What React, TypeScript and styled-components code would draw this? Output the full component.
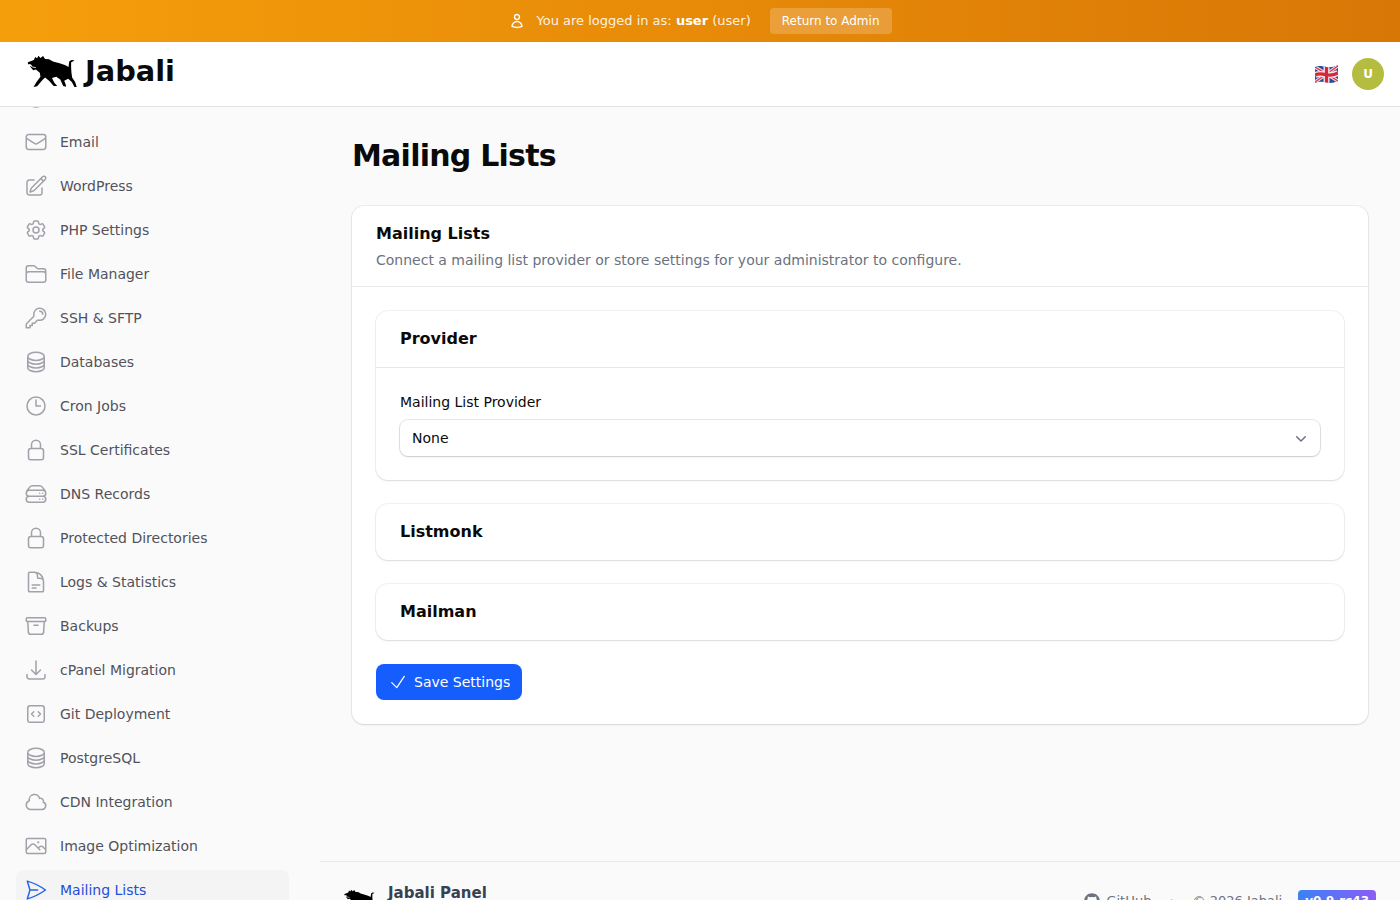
import React from "react";
import styled, { createGlobalStyle } from "styled-components";
import {
  HiOutlineGlobeAlt,
  HiOutlineEnvelope,
  HiOutlinePencilSquare,
  HiOutlineCog6Tooth,
  HiOutlineFolder,
  HiOutlineKey,
  HiOutlineCircleStack,
  HiOutlineClock,
  HiOutlineLockClosed,
  HiOutlineServerStack,
  HiOutlineDocumentText,
  HiOutlineArchiveBox,
  HiOutlineArrowDownTray,
  HiOutlineCodeBracketSquare,
  HiOutlineCloud,
  HiOutlinePhoto,
  HiOutlinePaperAirplane,
  HiOutlineUser,
  HiOutlineCheck,
  HiMiniChevronDown,
} from "react-icons/hi2";
import { FaGithub } from "react-icons/fa";

const GlobalStyle = createGlobalStyle`
  html, body {
    margin: 0;
    height: 100%;
    overflow: hidden;
    background: #fafafa;
    font-family: "DejaVu Sans", sans-serif;
  }
  * {
    box-sizing: border-box;
  }
`;

const Page = styled.div`
  height: 100vh;
  display: flex;
  flex-direction: column;
  overflow: hidden;
`;

const Banner = styled.div`
  flex: 0 0 42px;
  display: flex;
  align-items: center;
  justify-content: center;
  gap: 19px;
  padding-left: 1px;
  background: linear-gradient(90deg, #f59e0b, #d97706);
  color: rgba(255, 255, 255, 0.9);
  font-size: 13px;
`;

const BannerText = styled.div`
  display: flex;
  align-items: center;
  gap: 11px;

  svg {
    color: #fff;
  }

  span {
    padding-bottom: 2px;
  }

  b {
    color: #fff;
  }
`;

const ReturnButton = styled.a`
  height: 26px;
  padding: 0 12px;
  display: flex;
  align-items: center;
  background: rgba(255, 255, 255, 0.2);
  border-radius: 4px;
  font-size: 12px;
  color: #fff;
`;

const Header = styled.header`
  flex: 0 0 65px;
  display: flex;
  align-items: center;
  justify-content: space-between;
  padding: 0 16px 0 27px;
  background: #fff;
  border-bottom: 1px solid #e4e4e7;
  position: relative;
  z-index: 1;
`;

const Brand = styled.div`
  display: flex;
  align-items: center;
  gap: 8px;
  margin-bottom: 6px;
  font-size: 28.8px;
  font-weight: 700;
  color: #0a0a0a;
`;

const HeaderRight = styled.div`
  display: flex;
  align-items: center;
  gap: 14px;
`;

const Avatar = styled.div`
  width: 32px;
  height: 32px;
  border-radius: 50%;
  display: flex;
  align-items: center;
  justify-content: center;
  background: #b5bd40;
  color: #fff;
  font-size: 12px;
  font-weight: 700;
`;

const Body = styled.div`
  flex: 1;
  display: flex;
  min-height: 0;
`;

const Sidebar = styled.nav`
  flex: 0 0 320px;
  overflow: hidden;
  padding: 0 31px 0 16px;
`;

const NavList = styled.div`
  display: flex;
  flex-direction: column;
  gap: 4px;
  margin-top: -29px;
`;

const NavItem = styled.a<{ $active?: boolean }>`
  flex: 0 0 40px;
  display: flex;
  align-items: center;
  gap: 12px;
  padding: 0 8px;
  border-radius: 8px;
  font-size: 14px;
  color: ${(p) => (p.$active ? "#1d4ed8" : "#52525b")};
  background: ${(p) => (p.$active ? "#f4f4f5" : "transparent")};

  svg {
    flex: none;
    font-size: 24px;
    color: ${(p) => (p.$active ? "#2563eb" : "#a1a1aa")};
  }
`;

const Main = styled.main`
  flex: 1;
  min-width: 0;
  overflow: hidden;
`;

const Content = styled.div`
  height: 754px;
  padding: 31px 32px 0;
`;

const Title = styled.h1`
  margin: 0 0 32px;
  font-size: 30px;
  line-height: 36px;
  font-weight: 700;
  letter-spacing: -0.75px;
  color: #0a0a0a;
`;

const Card = styled.section`
  background: #fff;
  border-radius: 12px;
  box-shadow: 0 1px 2px rgba(0, 0, 0, 0.1), 0 0 0 1px rgba(10, 10, 10, 0.06);
`;

const CardHeader = styled.div`
  padding: 16px 24px 16px;
  border-bottom: 1px solid #e8e8ea;
`;

const CardTitle = styled.h2`
  margin: 0;
  font-size: 16px;
  line-height: 24px;
  font-weight: 700;
  color: #0a0a0a;
`;

const CardDescription = styled.p`
  margin: 4px 0 0;
  font-size: 14px;
  line-height: 20px;
  color: #6b7280;
`;

const CardBody = styled.div`
  padding: 24px;
  display: flex;
  flex-direction: column;
  gap: 24px;
`;

const Section = styled.div`
  background: #fff;
  border-radius: 12px;
  box-shadow: 0 1px 2px rgba(0, 0, 0, 0.1), 0 0 0 1px rgba(10, 10, 10, 0.05);
`;

const SectionHeader = styled.div<{ $open?: boolean }>`
  height: ${(p) => (p.$open ? "57px" : "56px")};
  display: flex;
  align-items: center;
  padding: 0 24px 2px;
  font-size: 16px;
  font-weight: 700;
  color: #0a0a0a;
  border-bottom: ${(p) => (p.$open ? "1px solid #e8e8ea" : "none")};
`;

const SectionBody = styled.div`
  padding: 24px;
`;

const Label = styled.label`
  display: block;
  margin-bottom: 8px;
  font-size: 14px;
  line-height: 20px;
  color: #0a0a0a;
`;

const SelectBox = styled.div`
  height: 36px;
  display: flex;
  align-items: center;
  justify-content: space-between;
  padding: 0 9px 0 12px;
  border-radius: 8px;
  background: #fff;
  font-size: 14px;
  color: #0a0a0a;
  box-shadow: 0 1px 2px rgba(0, 0, 0, 0.12), 0 0 0 1px rgba(10, 10, 10, 0.1);

  svg {
    font-size: 20px;
    color: #6b7280;
  }
`;

const SaveButton = styled.button`
  align-self: flex-start;
  height: 36px;
  display: flex;
  align-items: center;
  gap: 6px;
  padding: 0 12px;
  border: 0;
  border-radius: 8px;
  background: #155dfc;
  color: #fff;
  font: inherit;
  font-size: 14px;

  svg {
    font-size: 20px;
  }
`;

const Footer = styled.footer`
  display: flex;
  align-items: flex-start;
  justify-content: space-between;
  padding: 21px 24px 0;
  border-top: 1px solid #e9e9eb;
  height: 80px;
`;

const FooterBrand = styled.div`
  display: flex;
  gap: 12px;
  font-size: 15px;
  font-weight: 700;
  color: #374151;
  line-height: 20px;

  svg {
    margin-top: 6px;
  }
`;

const FooterMeta = styled.div`
  display: flex;
  align-items: flex-start;
  gap: 16px;
  padding-top: 8px;
  font-size: 13px;
  color: #6b7280;
  line-height: 20px;
`;

const GithubLink = styled.a`
  display: flex;
  align-items: center;
  gap: 6px;

  svg {
    font-size: 16px;
  }
`;

const Dot = styled.span`
  margin: 0 3px 0 2px;
  color: #9ca3af;
`;

const VersionBadge = styled.span`
  padding: 3px 7px;
  border-radius: 4px;
  background: linear-gradient(90deg, #3b82f6, #8b5cf6);
  color: #fff;
  font-size: 12px;
  font-weight: 700;
  line-height: 16px;
  position: relative;
  top: -1px;
`;

const BoarLogo = ({ width, height }: { width: number; height: number }) => (
  <svg width={width} height={height} viewBox="22 22 150 100" fill="#000">
    <path d="M24 44 L34 40 L42 37 L46 28 L52 32 L56 24 L62 31 L70 25 L76 34 L88 35 L100 42 L120 47 L138 53 L147 58 L149 42 L156 37 L165 38 L160 42 L155 44 L155 62 L156 76 L158 90 L167 104 L172 119 L165 119 L157 104 L146 94 L134 100 L138 110 L140 118 L131 116 L122 96 L110 88 L97 92 L104 106 L113 116 L102 116 L88 100 L76 90 L66 100 L52 117 L41 119 L50 104 L62 88 L60 76 L48 66 L40 68 L30 56 L38 56 L32 50 L24 50 Z" />
    <path d="M29 50 Q36 62 48 60" fill="none" stroke="#fff" strokeWidth="2.5" />
  </svg>
);

// wavy union flag, the emoji in the reference has a waving edge
const UkFlag = () => (
  <svg width="23" height="18" viewBox="0 0 23 18">
    <defs>
      <clipPath id="flag-wave">
        <path d="M0 2 C4 0 8 1.5 11.5 2 C15 2.5 19 2 23 0 L23 16 C19 18 15 18.5 11.5 17.5 C8 16.5 4 16 0 18 Z" />
      </clipPath>
    </defs>
    <g clipPath="url(#flag-wave)">
      <rect width="23" height="18" fill="#2a4a9c" />
      <path d="M0 2 L23 16 M23 1 L0 17" stroke="#f3d5da" strokeWidth="3.4" />
      <path d="M0 2 L23 16 M23 1 L0 17" stroke="#d8384c" strokeWidth="1.3" />
      <path d="M11.5 0 V18" stroke="#f7e4e6" strokeWidth="6" />
      <path d="M0 10 C4 8 8 9 11.5 9.7 C15 10.4 19 10 23 8" fill="none" stroke="#f7e4e6" strokeWidth="6" />
      <path d="M11.5 0 V18" stroke="#d8263c" strokeWidth="3.2" />
      <path d="M0 10 C4 8 8 9 11.5 9.7 C15 10.4 19 10 23 8" fill="none" stroke="#d8263c" strokeWidth="3.2" />
    </g>
  </svg>
);

const items = [
  { label: "Domains", icon: HiOutlineGlobeAlt },
  { label: "Email", icon: HiOutlineEnvelope },
  { label: "WordPress", icon: HiOutlinePencilSquare },
  { label: "PHP Settings", icon: HiOutlineCog6Tooth },
  { label: "File Manager", icon: HiOutlineFolder },
  { label: "SSH & SFTP", icon: HiOutlineKey },
  { label: "Databases", icon: HiOutlineCircleStack },
  { label: "Cron Jobs", icon: HiOutlineClock },
  { label: "SSL Certificates", icon: HiOutlineLockClosed },
  { label: "DNS Records", icon: HiOutlineServerStack },
  { label: "Protected Directories", icon: HiOutlineLockClosed },
  { label: "Logs & Statistics", icon: HiOutlineDocumentText },
  { label: "Backups", icon: HiOutlineArchiveBox },
  { label: "cPanel Migration", icon: HiOutlineArrowDownTray },
  { label: "Git Deployment", icon: HiOutlineCodeBracketSquare },
  { label: "PostgreSQL", icon: HiOutlineCircleStack },
  { label: "CDN Integration", icon: HiOutlineCloud },
  { label: "Image Optimization", icon: HiOutlinePhoto },
  { label: "Mailing Lists", icon: HiOutlinePaperAirplane, active: true },
];

export default function App() {
  return (
    <Page>
      <GlobalStyle />
      <Banner>
        <BannerText>
          <HiOutlineUser size={16} strokeWidth={2} />
          <span>
            You are logged in as: <b>user</b> (user)
          </span>
        </BannerText>
        <ReturnButton>Return to Admin</ReturnButton>
      </Banner>
      <Header>
        <Brand>
          <BoarLogo width={50} height={33} />
          Jabali
        </Brand>
        <HeaderRight>
          <UkFlag />
          <Avatar>U</Avatar>
        </HeaderRight>
      </Header>
      <Body>
        <Sidebar>
          <NavList>
            {items.map(({ label, icon: Icon, active }) => (
              <NavItem key={label} $active={active}>
                <Icon />
                {label}
              </NavItem>
            ))}
          </NavList>
        </Sidebar>
        <Main>
          <Content>
            <Title>Mailing Lists</Title>
            <Card>
              <CardHeader>
                <CardTitle>Mailing Lists</CardTitle>
                <CardDescription>
                  Connect a mailing list provider or store settings for your administrator to configure.
                </CardDescription>
              </CardHeader>
              <CardBody>
                <Section>
                  <SectionHeader $open>Provider</SectionHeader>
                  <SectionBody>
                    <Label>Mailing List Provider</Label>
                    <SelectBox>
                      None
                      <HiMiniChevronDown />
                    </SelectBox>
                  </SectionBody>
                </Section>
                <Section>
                  <SectionHeader>Listmonk</SectionHeader>
                </Section>
                <Section>
                  <SectionHeader>Mailman</SectionHeader>
                </Section>
                <SaveButton>
                  <HiOutlineCheck />
                  Save Settings
                </SaveButton>
              </CardBody>
            </Card>
          </Content>
          <Footer>
            <FooterBrand>
              <BoarLogo width={32} height={22} />
              Jabali Panel
            </FooterBrand>
            <FooterMeta>
              <GithubLink>
                <FaGithub />
                GitHub
              </GithubLink>
              <Dot>·</Dot>
              <span>© 2026 Jabali</span>
              <VersionBadge>v0.9-rc43</VersionBadge>
            </FooterMeta>
          </Footer>
        </Main>
      </Body>
    </Page>
  );
}
